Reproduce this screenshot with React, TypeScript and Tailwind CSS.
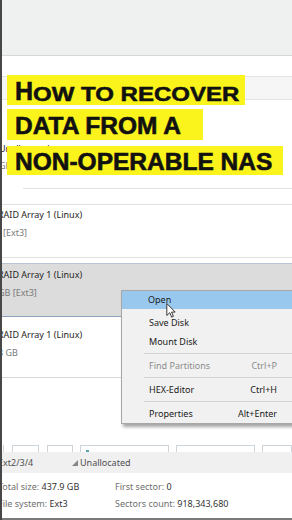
import React from "react";

function Cursor() {
  return (
    <svg width="10" height="15" viewBox="0 0 12 19" className="absolute left-[164px] top-[303px]">
      <path
        d="M0.7 0.7 L0.7 15.8 L4.4 12.3 L6.9 17.9 L9.1 16.9 L6.7 11.5 L11.3 11.5 Z"
        fill="#ffffff"
        stroke="#1a1a1a"
        strokeWidth="1.1"
        strokeLinejoin="round"
      />
    </svg>
  );
}

function MenuItem({
  label,
  shortcut,
  disabled,
}: {
  label: string;
  shortcut?: string;
  disabled?: boolean;
}) {
  return (
    <div
      className={`flex h-[19px] items-center justify-between pl-[27px] pr-[25px] ${
        disabled ? "text-[#8c8c8c]" : "text-[#1a1a1a]"
      }`}
    >
      <span>{label}</span>
      {shortcut ? <span>{shortcut}</span> : null}
    </div>
  );
}

function Sep() {
  return <div className="my-[2px] ml-[22px] h-px bg-[#d3d3d3]" />;
}

export default function App() {
  return (
    <div className="relative flex h-[520px] w-[292px] flex-col overflow-hidden border-l-2 border-[#474747] bg-white font-['Noto_Sans',sans-serif] text-[9px] leading-[12px] text-[#1e1e1e]">
      {/* top toolbar band */}
      <div className="h-[56px] shrink-0 border-b border-[#d5d7d7] bg-[#eff1f1]" />
      <div className="h-[20px] shrink-0" />
      <div className="h-[24px] shrink-0 border-y border-[#e4e4e4] bg-[#f6f6f6]" />

      {/* Unallocated row */}
      <div className="flex shrink-0 flex-col gap-[5px] pt-[43px]">
        <div className="ml-[-3px] whitespace-nowrap">Unallocated space</div>
        <div className="ml-[-3px] text-[#7a7a7a]">GB</div>
      </div>
      <div className="ml-[21px] mt-[16px] h-px shrink-0 bg-[#e2e2e2]" />
      <div className="h-[15px] shrink-0" />
      <div className="h-px shrink-0 bg-[#e0e0e0]" />

      {/* Row 2 */}
      <div className="flex shrink-0 flex-col gap-[6px] pt-[4px]">
        <div className="ml-[-4px] whitespace-nowrap">RAID Array 1 (Linux)</div>
        <div className="ml-[1px] text-[#7a7a7a]">[Ext3]</div>
      </div>
      <div className="h-[18px] shrink-0" />
      <div className="h-px shrink-0 bg-[#e0e0e0]" />
      <div className="h-[5px] shrink-0" />

      {/* Selected row */}
      <div className="flex h-[54px] shrink-0 flex-col gap-[6px] border-y border-t-[#b9c5d3] border-b-[#8da3bd] bg-[#dcdcdc] pt-[5px]">
        <div className="ml-[-4px] whitespace-nowrap">RAID Array 1 (Linux)</div>
        <div className="ml-[-4px] text-[#7a7a7a]">GB [Ext3]</div>
      </div>

      {/* Row 3 */}
      <div className="flex shrink-0 flex-col gap-[6px] pt-[12px]">
        <div className="ml-[-4px] whitespace-nowrap">RAID Array 1 (Linux)</div>
        <div className="ml-[-4px] text-[#7a7a7a]">3 GB</div>
      </div>
      <div className="h-[18px] shrink-0" />
      <div className="h-px shrink-0 bg-[#d9d9d9]" />
      <div className="h-[67px] shrink-0" />

      {/* partition map boxes */}
      <div className="flex h-[7px] shrink-0 items-start">
        <div className="h-[7px] w-[2px] border-r border-[#cdd5dc]" />
        <div className="ml-[8px] h-[7px] w-[28px] border-x border-t border-[#cdd5dc]" />
        <div className="ml-[8px] h-[7px] w-[28px] border-x border-t border-[#cdd5dc]" />
        <div className="ml-[7px] h-[7px] w-[93px] border-x border-t border-[#cdd5dc]">
          <div className="ml-[5px] mt-[4px] h-[2px] w-[3px] bg-[#5aa3ad]" />
        </div>
        <div className="ml-[7px] h-[7px] w-[83px] border-x border-t border-[#cdd5dc]" />
        <div className="ml-[7px] h-[7px] w-[30px] shrink-0 border-x border-t border-[#cdd5dc]" />
      </div>

      {/* legend band */}
      <div className="flex h-[21px] shrink-0 items-center bg-[#f0f0f0] text-[#4f4f4f]">
        <div className="ml-[-4px] w-[74px] whitespace-nowrap">Ext2/3/4</div>
        <svg width="6" height="6" viewBox="0 0 6 6" className="mt-[1px]">
          <polygon points="6,0 6,6 0,6" fill="#858585" />
        </svg>
        <div className="ml-[2px]">Unallocated</div>
      </div>

      {/* details */}
      <div className="flex flex-1 flex-col gap-[5px] pt-[8px]">
        <div className="ml-[-4px] grid grid-cols-[117px_1fr] whitespace-nowrap">
          <div>
            <span className="text-[#6f6f6f]">Total size: </span>
            <span className="text-[#333333]">437.9 GB</span>
          </div>
          <div>
            <span className="text-[#6f6f6f]">First sector: </span>
            <span className="text-[#333333]">0</span>
          </div>
        </div>
        <div className="ml-[-4px] grid grid-cols-[117px_1fr] whitespace-nowrap">
          <div>
            <span className="text-[#6f6f6f]">File system: </span>
            <span className="text-[#333333]">Ext3</span>
          </div>
          <div>
            <span className="text-[#6f6f6f]">Sectors count: </span>
            <span className="text-[#333333]">918,343,680</span>
          </div>
        </div>
      </div>
      <div className="h-[2px] shrink-0 bg-[#7a7a7a]" />

      {/* Title overlay */}
      <div className="absolute left-[5px] top-[75px] h-[30px] w-[238px] whitespace-nowrap bg-[#fbf31c] pl-[8px] font-['Liberation_Sans',Arial,sans-serif] text-[25px] font-bold leading-[32px] text-[#111111] [-webkit-text-stroke:0.6px_#111111]">
        H
        <span className="inline-block origin-bottom scale-y-[0.83] text-[24px] leading-[24px]">
          OW TO RECOVER
        </span>
      </div>
      <div className="absolute left-[5px] top-[109px] h-[31px] w-[196px] whitespace-nowrap bg-[#fbf31c] pl-[8px] font-['Liberation_Sans',Arial,sans-serif] text-[24.5px] font-bold leading-[34px] text-[#111111] [-webkit-text-stroke:0.6px_#111111]">
        DATA FROM A
      </div>
      <div className="absolute left-[5px] top-[146px] h-[29px] w-[276px] whitespace-nowrap bg-[#fbf31c] pl-[8px] font-['Liberation_Sans',Arial,sans-serif] text-[24.5px] font-bold leading-[31px] text-[#111111] [-webkit-text-stroke:0.6px_#111111]">
        NON-OPERABLE NAS
      </div>

      {/* Context menu */}
      <div className="absolute left-[119px] top-[290px] w-[182px] border border-[#a7a7a7] bg-[#f1f1f1] shadow-[2px_3px_3px_rgba(0,0,0,0.35)]">
        <div className="flex h-[18px] items-center bg-[#98c8ee] pl-[26px] text-[#1a1a1a]">Open</div>
        <div className="mt-[4px]">
          <MenuItem label="Save Disk" />
          <MenuItem label="Mount Disk" />
          <Sep />
          <MenuItem label="Find Partitions" shortcut="Ctrl+P" disabled />
          <Sep />
          <MenuItem label="HEX-Editor" shortcut="Ctrl+H" />
          <Sep />
          <MenuItem label="Properties" shortcut="Alt+Enter" />
        </div>
      </div>

      <Cursor />
    </div>
  );
}
